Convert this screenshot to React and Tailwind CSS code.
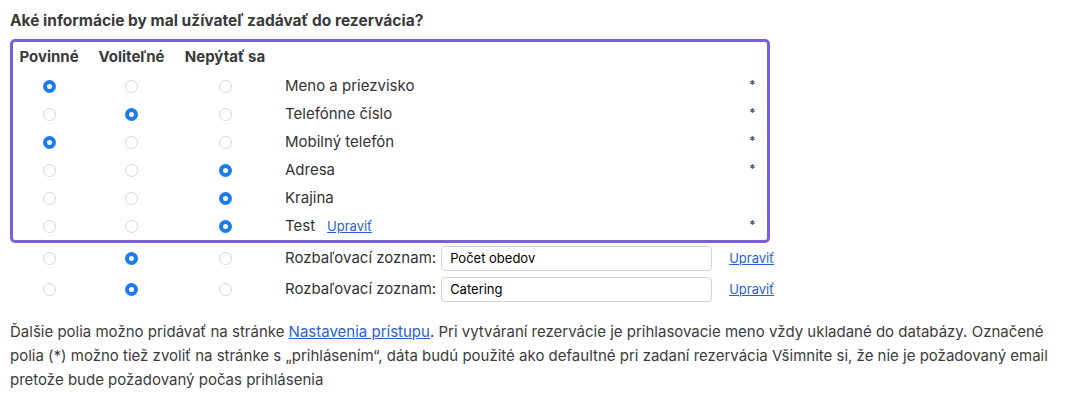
import React from 'react';

const rows = [
  { label: 'Meno a priezvisko', value: 0, star: true },
  { label: 'Telefónne číslo', value: 1, star: true },
  { label: 'Mobilný telefón', value: 0, star: true },
  { label: 'Adresa', value: 2, star: true },
  { label: 'Krajina', value: 2, star: false },
  { label: 'Test', value: 2, star: true, edit: true },
];

const lists = [
  { name: 'Počet obedov', value: 1 },
  { name: 'Catering', value: 1 },
];

const Radio = ({ checked }) =>
  checked ? (
    <span className="inline-flex w-[13px] h-[13px] rounded-full bg-[#1b7cf0] items-center justify-center">
      <span className="w-[5px] h-[5px] rounded-full bg-white" />
    </span>
  ) : (
    <span className="inline-block w-[13px] h-[13px] rounded-full border border-[#d6d6d6] bg-white" />
  );

const cols = 'grid grid-cols-[72px_93px_94px_1fr_40px] items-center';

const RadioCells = ({ value }) => (
  <>
    {[0, 1, 2].map((i) => (
      <div key={i} className="flex justify-center">
        <Radio checked={value === i} />
      </div>
    ))}
  </>
);

const App = () => {
  return (
    <div className="w-[1070px] h-[399px] bg-white text-[#333] px-[10px] pt-[10px]" style={{ fontFamily: 'Inter, "Liberation Sans", sans-serif' }}>
      <h3 className="text-[15.5px] font-bold leading-[22px] text-[#3a3a3a]">Aké informácie by mal užívateľ zadávať do rezervácia?</h3>
      <div className="w-[760px] mt-[7px]">
        <div className="border-[3px] border-[#7a5fdb] rounded-[5px]">
          <div className={cols + ' h-[30px] text-[15px] font-bold text-[#3a3a3a]'}>
            <div className="text-center">Povinné</div>
            <div className="text-center">Voliteľné</div>
            <div className="text-center">Nepýtať sa</div>
            <div />
            <div />
          </div>
          {rows.map((r) => (
            <div key={r.label} className={cols + ' h-[28px]'}>
              <RadioCells value={r.value} />
              <div className="pl-[13px] text-[15px] flex items-baseline">
                <span>{r.label}</span>
                {r.edit && (
                  <a href="#" className="ml-[12px] text-[13px] text-[#2a5fd8] underline">Upraviť</a>
                )}
              </div>
              <div className="text-[12px] font-bold text-[#555] pl-[22px] -mt-[2px]">{r.star ? '*' : ''}</div>
            </div>
          ))}
        </div>
        <div className="pl-[3px]">
          {lists.map((l) => (
            <div key={l.name} className="grid grid-cols-[72px_93px_94px_1fr] items-center h-[31px]">
              <RadioCells value={l.value} />
              <div className="pl-[13px] text-[15px] flex items-center whitespace-nowrap">
                <span className="shrink-0">Rozbaľovací zoznam:</span>
                <div className="ml-[5px] shrink-0 w-[271px] h-[25px] border border-[#d3d3d3] rounded-[4px] px-[8px] flex items-center text-[13px] text-black">
                  {l.name}
                </div>
                <a href="#" className="ml-[17px] shrink-0 text-[13px] text-[#2a5fd8] underline">Upraviť</a>
              </div>
            </div>
          ))}
        </div>
      </div>
      <p className="mt-[15px] text-[15px] leading-[24px] text-[#3c3c3c]">
        Ďalšie polia možno pridávať na stránke{' '}
        <a href="#" className="text-[#2a5fd8] underline">Nastavenia prístupu</a>. Pri vytváraní rezervácie je prihlasovacie meno vždy ukladané do databázy. Označené polia (*) možno tiež zvoliť na stránke s „prihlásením“, dáta budú použité ako defaultné pri zadaní rezervácia Všimnite si, že nie je požadovaný email pretože bude požadovaný počas prihlásenia
      </p>
    </div>
  );
};

export default App;
